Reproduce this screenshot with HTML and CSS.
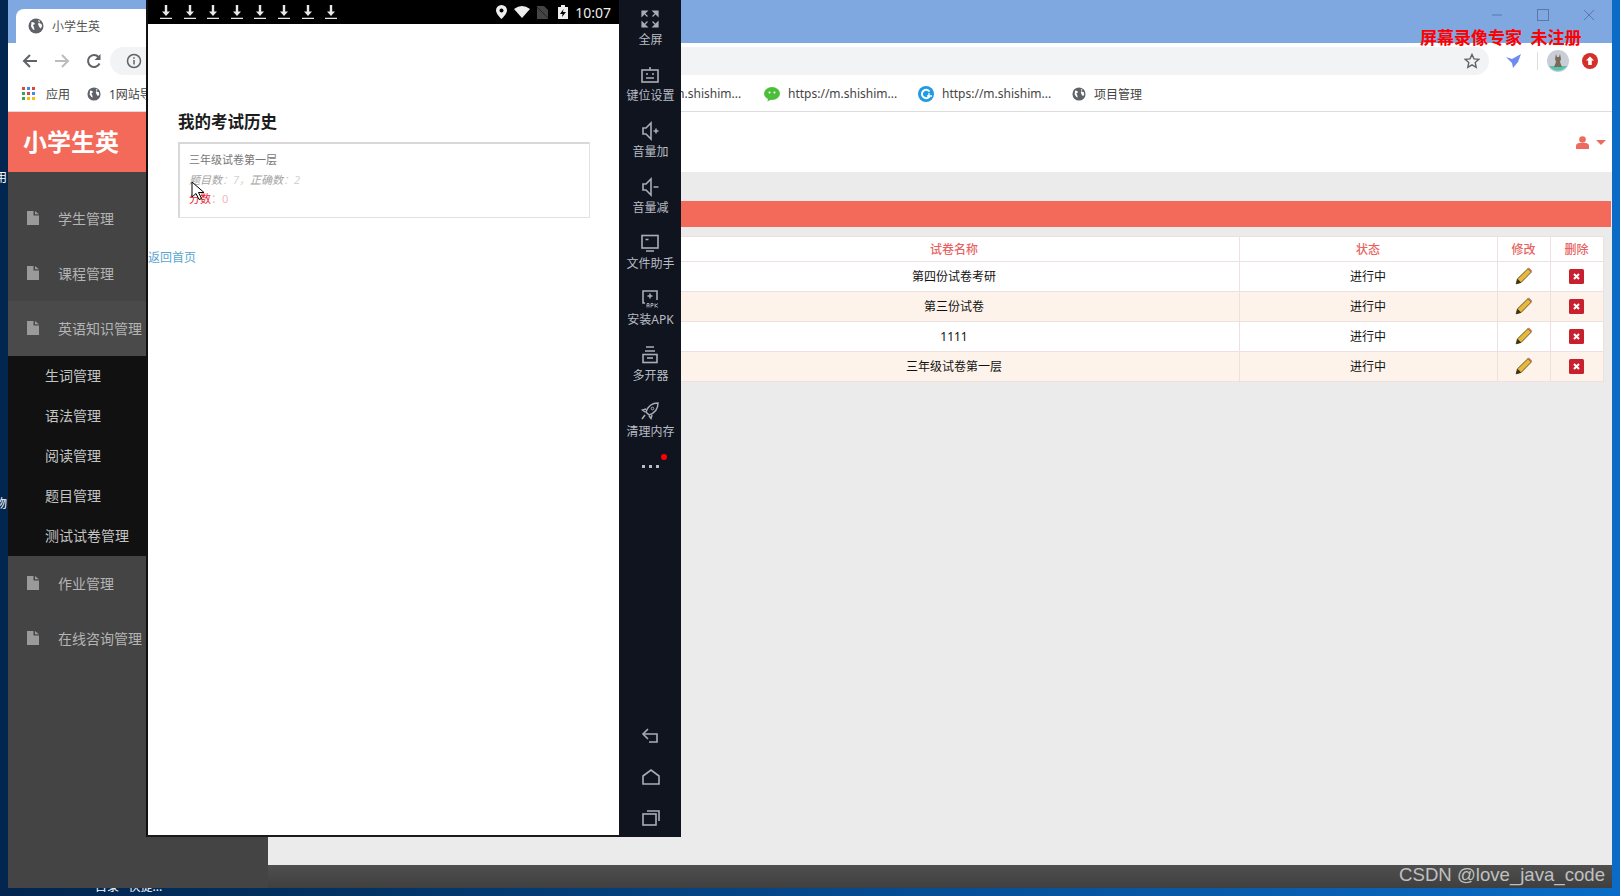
FILE: index.html
```html
<!doctype html>
<html>
    <head>
        <meta charset="UTF-8">
        <title>小学生英</title>
        <link rel="stylesheet" href="styles.css">
    </head>
    <body>
        <svg class="defs" width="0" height="0">
            <symbol id="globe" viewBox="0 0 16 16">
                <circle cx="8" cy="8" r="7.500" fill="#5f6368"/>
                <path d="M3.500 4l2.500.5 1 1.500-2 1 1 2.500.5 2.500-1.500-.5-2-3zM10 2l2 1-1 2 2.500 1 .5 2.500-1.500 2-1.500-2-1-2.500 1-1.500z" fill="#fff"/>
            </symbol>
            <symbol id="doc" viewBox="0 0 12 14">
                <path d="M0 0h6.500v4.500H12V14H0zM8 0l4 3.200H8z" fill="#9a9a9a"/>
            </symbol>
            <symbol id="dl" viewBox="0 0 12 14">
                <path d="M4.800 0h2.400v6.500H10L6 11 2 6.500h2.800zM0 12.800h12V14H0z" fill="#e8e8e8"/>
            </symbol>
            <symbol id="pencil" viewBox="0 0 16 16">
                <path d="M1 15l1.200-4.500L11.500 1.500l3 3L5.500 13.700z" fill="#e6b93c" stroke="#5c4a1e" stroke-width=".8"/>
                <path d="M11.500 1.500l3 3 .8-1-3-3z" fill="#c9705a"/>
                <path d="M1 15l1.200-4.500 3.300 3.200z" fill="#3b3220"/>
            </symbol>
            <symbol id="del" viewBox="0 0 15 15">
                <rect width="15" height="15" rx="1.500" fill="#c9202f"/>
                <path d="M5 5l5 5M10 5l-5 5" stroke="#fff" stroke-width="2"/>
            </symbol>
        </svg>

        <div class="desktop">
            <span class="desk-text desk-a">用</span>
            <span class="desk-text desk-b">物</span>
            <span class="desk-text desk-c">目录 · 快捷...</span>

            <div class="browser">
                <div class="titlebar">
                    <div class="tab">
                        <svg class="ico16"><use href="#globe"/></svg>
                        <span>小学生英</span>
                    </div>
                    <div class="win-controls">
                        <svg width="12" height="12" viewBox="0 0 12 12"><path d="M1 6h10" stroke="#5b78a8"/></svg>
                        <svg width="12" height="12" viewBox="0 0 12 12"><rect x=".5" y=".5" width="11" height="11" fill="none" stroke="#5b78a8"/></svg>
                        <svg width="12" height="12" viewBox="0 0 12 12"><path d="M1 1l10 10M11 1L1 11" stroke="#5b78a8"/></svg>
                    </div>
                </div>

                <div class="toolbar">
                    <svg class="nav-btn" width="16" height="16" viewBox="0 0 16 16"><path d="M15 8H2M8 2L2 8l6 6" fill="none" stroke="#5f6368" stroke-width="2"/></svg>
                    <svg class="nav-btn" width="16" height="16" viewBox="0 0 16 16"><path d="M1 8h13M8 2l6 6-6 6" fill="none" stroke="#b9bcc0" stroke-width="2"/></svg>
                    <svg class="nav-btn" width="16" height="16" viewBox="0 0 16 16"><path d="M13.500 10.500A6 6 0 1 1 12.500 4" fill="none" stroke="#5f6368" stroke-width="2"/><path d="M14.500 1v6h-6z" fill="#5f6368"/></svg>
                    <div class="omnibox">
                        <svg width="16" height="16" viewBox="0 0 16 16"><circle cx="8" cy="8" r="6.500" fill="none" stroke="#5f6368" stroke-width="1.500"/><path d="M8 7v4.500M8 4.300v1.500" stroke="#5f6368" stroke-width="1.500"/></svg>
                        <svg class="star" width="16" height="16" viewBox="0 0 16 16"><path d="M8 1.500l2 4.400 4.700.5-3.500 3.200 1 4.700L8 11.900l-4.200 2.400 1-4.700-3.500-3.200 4.700-.5z" fill="none" stroke="#5f6368" stroke-width="1.400"/></svg>
                    </div>
                    <svg class="bird" width="18" height="16" viewBox="0 0 18 16"><path d="M1 4l6 2 9-5-3 8-5 6-1-5z" fill="#6d8bf0"/></svg>
                    <span class="tool-divider"></span>
                    <svg class="avatar" width="22" height="22" viewBox="0 0 22 22">
                        <circle cx="11" cy="11" r="11" fill="#c9ced6"/>
                        <path d="M2 16h18a11 11 0 0 1-18 0z" fill="#56c4ad"/>
                        <path d="M9 4l1 3h2l1-3 1 5-1 3 2 5H7l2-5-1-3z" fill="#7a6a58"/>
                    </svg>
                    <svg class="upload" width="16" height="16" viewBox="0 0 16 16"><circle cx="8" cy="8" r="8" fill="#d3302a"/><path d="M8 3.500l4 4H9.800V12H6.200V7.500H4z" fill="#fff"/></svg>
                </div>

                <div class="bookmarks">
                    <span class="bm bm-apps">
                        <svg class="ico14" viewBox="0 0 14 14">
                            <rect x="0" y="0" width="3" height="3" fill="#d9483b"/><rect x="5" y="0" width="3" height="3" fill="#4285f4"/><rect x="10" y="0" width="3" height="3" fill="#d9483b"/>
                            <rect x="0" y="5" width="3" height="3" fill="#34a853"/><rect x="5" y="5" width="3" height="3" fill="#d9483b"/><rect x="10" y="5" width="3" height="3" fill="#4285f4"/>
                            <rect x="0" y="10" width="3" height="3" fill="#34a853"/><rect x="5" y="10" width="3" height="3" fill="#fbbc05"/><rect x="10" y="10" width="3" height="3" fill="#fbbc05"/>
                        </svg>
                        应用
                    </span>
                    <span class="bm bm-first"><svg class="ico14"><use href="#globe"/></svg>1网站导航</span>
                    <span class="bm"><svg class="ico14"><use href="#globe"/></svg>https://m.shishim...</span>
                    <span class="bm">
                        <svg class="ico16" viewBox="0 0 16 16"><ellipse cx="8" cy="7.500" rx="8" ry="6.500" fill="#4cbf3a"/><path d="M4 12l-.5 3.500L8 13z" fill="#4cbf3a"/><circle cx="5.500" cy="6.500" r="1" fill="#fff"/><circle cx="10.500" cy="6.500" r="1" fill="#fff"/></svg>
                        https://m.shishim...
                    </span>
                    <span class="bm">
                        <svg class="ico16" viewBox="0 0 16 16"><circle cx="8" cy="8" r="8" fill="#1e9be8"/><path d="M11.500 5.500A4.200 4.200 0 1 0 11.500 10.500" fill="none" stroke="#fff" stroke-width="2"/><path d="M11 7v5M9 10h5" stroke="#fff" stroke-width="1.300"/></svg>
                        https://m.shishim...
                    </span>
                    <span class="bm"><svg class="ico14"><use href="#globe"/></svg>项目管理</span>
                </div>

                <div class="app">
                    <aside class="sidebar">
                        <div class="logo">小学生英</div>
                        <ul class="menu">
                            <li class="menu-item"><svg class="doc"><use href="#doc"/></svg>学生管理</li>
                            <li class="menu-item"><svg class="doc"><use href="#doc"/></svg>课程管理</li>
                            <li class="menu-item is-open"><svg class="doc"><use href="#doc"/></svg>英语知识管理</li>
                            <li class="submenu">
                                <a>生词管理</a>
                                <a>语法管理</a>
                                <a>阅读管理</a>
                                <a>题目管理</a>
                                <a>测试试卷管理</a>
                            </li>
                            <li class="menu-item"><svg class="doc"><use href="#doc"/></svg>作业管理</li>
                            <li class="menu-item"><svg class="doc"><use href="#doc"/></svg>在线咨询管理</li>
                        </ul>
                    </aside>

                    <div class="main">
                        <header class="top">
                            <svg width="13" height="13" viewBox="0 0 13 13"><circle cx="6.500" cy="3.500" r="3.300" fill="#ef6a5e"/><path d="M0 13V10q0-2.500 3-3h7q3 .5 3 3v3z" fill="#ef6a5e"/></svg>
                            <span class="caret"></span>
                        </header>
                        <section class="content">
                            <div class="bar"></div>
                            <table class="grid">
                                <colgroup>
                                    <col class="c-id"><col class="c-name"><col class="c-state"><col class="c-edit"><col class="c-del">
                                </colgroup>
                                <thead>
                                    <tr><th>编号</th><th>试卷名称</th><th>状态</th><th>修改</th><th>删除</th></tr>
                                </thead>
                                <tbody>
                                    <tr><td>1</td><td>第四份试卷考研</td><td>进行中</td><td><svg class="pencil"><use href="#pencil"/></svg></td><td><svg class="ico15"><use href="#del"/></svg></td></tr>
                                    <tr><td>2</td><td>第三份试卷</td><td>进行中</td><td><svg class="pencil"><use href="#pencil"/></svg></td><td><svg class="ico15"><use href="#del"/></svg></td></tr>
                                    <tr><td>3</td><td>1111</td><td>进行中</td><td><svg class="pencil"><use href="#pencil"/></svg></td><td><svg class="ico15"><use href="#del"/></svg></td></tr>
                                    <tr><td>4</td><td>三年级试卷第一层</td><td>进行中</td><td><svg class="pencil"><use href="#pencil"/></svg></td><td><svg class="ico15"><use href="#del"/></svg></td></tr>
                                </tbody>
                            </table>
                        </section>
                        <footer class="bottom"></footer>
                    </div>
                </div>
            </div>

            <div class="emulator">
                <div class="screen">
                    <div class="statusbar">
                        <div class="dl-group">
                            <svg><use href="#dl"/></svg><svg><use href="#dl"/></svg><svg><use href="#dl"/></svg><svg><use href="#dl"/></svg>
                            <svg><use href="#dl"/></svg><svg><use href="#dl"/></svg><svg><use href="#dl"/></svg><svg><use href="#dl"/></svg>
                        </div>
                        <div class="status-right">
                            <svg width="11" height="14" viewBox="0 0 11 14"><path d="M5.500 0A5.500 5.500 0 0 1 11 5.500C11 9 5.500 14 5.500 14S0 9 0 5.500A5.500 5.500 0 0 1 5.500 0z" fill="#eee"/><circle cx="5.500" cy="5.500" r="2" fill="#000"/></svg>
                            <svg width="16" height="12" viewBox="0 0 16 12"><path d="M0 3q8-6 16 0L8 12z" fill="#eee"/></svg>
                            <svg width="11" height="13" viewBox="0 0 11 13"><path d="M0 0h7l4 4v9H0z" fill="#444"/><path d="M0 1l11 11" stroke="#222"/></svg>
                            <svg class="batt" width="10" height="14" viewBox="0 0 10 14"><path d="M3 0h4v2h3v12H0V2h3z" fill="#eee"/><path d="M5.500 4L2 9h2.500L4 12l4-5H5z" fill="#000"/></svg>
                            <span class="clock">10:07</span>
                        </div>
                    </div>
                    <div class="phone-page">
                        <h1>我的考试历史</h1>
                        <div class="exam-card">
                            <p class="exam-name">三年级试卷第一层</p>
                            <p class="exam-count">题目数<span class="faint">：7，</span>正确数<span class="faint">：2</span></p>
                            <p class="exam-score">分数<span class="faint-red">：0</span></p>
                        </div>
                        <a class="back-link">返回首页</a>
                    </div>
                </div>

                <div class="tools">
                    <div class="tool">
                        <svg viewBox="0 0 20 20"><path d="M2 2h5L2 7zM18 2h-5l5 5zM2 18h5l-5-5zM18 18h-5l5-5zM5 5l2.500 2.500M15 5l-2.500 2.500M5 15l2.500-2.500M15 15l-2.500-2.500" fill="#a9adb5" stroke="#a9adb5" stroke-width="1.200"/></svg>
                        <span>全屏</span>
                    </div>
                    <div class="tool">
                        <svg viewBox="0 0 20 20"><rect x="2" y="5" width="16" height="12" fill="none" stroke="#a9adb5" stroke-width="1.600"/><path d="M10 2v3M6 9h2M12 9h2M6 13h8" stroke="#a9adb5" stroke-width="1.600"/></svg>
                        <span>键位设置</span>
                    </div>
                    <div class="tool">
                        <svg viewBox="0 0 20 20"><path d="M3 7h3l5-5v16l-5-5H3z" fill="none" stroke="#a9adb5" stroke-width="1.600"/><path d="M13.500 10h5M16 7.500v5" stroke="#a9adb5" stroke-width="1.500"/></svg>
                        <span>音量加</span>
                    </div>
                    <div class="tool">
                        <svg viewBox="0 0 20 20"><path d="M3 7h3l5-5v16l-5-5H3z" fill="none" stroke="#a9adb5" stroke-width="1.600"/><path d="M13.500 10h5" stroke="#a9adb5" stroke-width="1.500"/></svg>
                        <span>音量减</span>
                    </div>
                    <div class="tool">
                        <svg viewBox="0 0 20 20"><rect x="2" y="2.500" width="16" height="12.500" fill="none" stroke="#a9adb5" stroke-width="1.600"/><path d="M5.500 6.500h3M6 18h8" stroke="#a9adb5" stroke-width="1.600"/></svg>
                        <span>文件助手</span>
                    </div>
                    <div class="tool">
                        <svg viewBox="0 0 20 20"><path d="M5 14H3V2h14v9" fill="none" stroke="#a9adb5" stroke-width="1.600"/><path d="M10 4.500v5M7.500 7h5" stroke="#a9adb5" stroke-width="1.500"/><path d="M7 18.500v-4h2v4M7 16.500h2M11 18.500v-4h2v2h-2M15 14.500v4M18 14.500l-3 2 3 2" fill="none" stroke="#a9adb5" stroke-width=".9"/></svg>
                        <span>安装APK</span>
                    </div>
                    <div class="tool">
                        <svg viewBox="0 0 20 20"><path d="M6 2h8M5 6h10" stroke="#a9adb5" stroke-width="1.600"/><rect x="3" y="9.500" width="14" height="8" fill="none" stroke="#a9adb5" stroke-width="1.600"/><path d="M7 13h6" stroke="#a9adb5" stroke-width="1.600"/></svg>
                        <span>多开器</span>
                    </div>
                    <div class="tool">
                        <svg viewBox="0 0 20 20"><path d="M18 2c-6 0-10 3-12 9l3 3c6-2 9-6 9-12zM6 8L2.500 9 5 11M12 14l-1 3.500-2-2.500M5 14l-3 4" fill="none" stroke="#a9adb5" stroke-width="1.500"/><circle cx="12.500" cy="7.500" r="1.300" fill="none" stroke="#a9adb5"/></svg>
                        <span>清理内存</span>
                    </div>
                    <div class="more">
                        <i></i><i></i><i></i>
                        <b class="red-dot"></b>
                    </div>
                    <div class="sys-keys">
                        <svg viewBox="0 0 20 20"><path d="M7 3L2 8l5 5" fill="none" stroke="#a9adb5" stroke-width="1.600"/><path d="M2 8h14v8H8" fill="none" stroke="#a9adb5" stroke-width="1.600"/></svg>
                        <svg viewBox="0 0 20 20"><path d="M2 9l8-6 8 6v8H2z" fill="none" stroke="#a9adb5" stroke-width="1.600"/></svg>
                        <svg viewBox="0 0 20 20"><rect x="2" y="6" width="13" height="11" fill="none" stroke="#a9adb5" stroke-width="1.600"/><path d="M6 3h12v10" fill="none" stroke="#a9adb5" stroke-width="1.600"/></svg>
                    </div>
                </div>
            </div>

            <svg class="cursor" width="14" height="20" viewBox="0 0 14 20"><path d="M1 1v15l4-3.500 3 6 2.500-1-3-6H13z" fill="#fff" stroke="#000"/></svg>
            <div class="rec-mark">屏幕录像专家 未注册</div>
            <div class="csdn-mark">CSDN @love_java_code</div>
        </div>
    </body>
</html>
```

FILE: styles.css
```css
:root {
    --coral: #f46a5a;
    --panel: #444;
    --tool-bg: #10141f;
    --tool-fg: #b8bcc4;
    --line: #eedfe0;
}

html, body {
    margin: 0;
    height: 100%;
    overflow: hidden;
}

* {
    box-sizing: border-box;
    font-family: "Noto Sans", "Noto Sans CJK SC", sans-serif;
}

.defs {
    position: absolute;
}

.ico14 {
    width: 14px;
    height: 14px;
    flex: none;
}

.ico15 {
    width: 15px;
    height: 15px;
    display: block;
    margin: 0 auto;
}

.ico16 {
    width: 16px;
    height: 16px;
    flex: none;
}

.pencil {
    width: 18px;
    height: 18px;
    display: block;
    margin: 0 auto;
}

.desktop {
    position: relative;
    width: 1620px;
    height: 896px;
    overflow: hidden;
    background: linear-gradient(90deg, #02264f 0, #03305f 300px, #054c93 900px, #0a6cc6 1620px);
}

.desk-text {
    position: absolute;
    color: #fff;
    font-size: 12px;
    line-height: 16px;
}

.desk-a {
    left: -5px;
    top: 170px;
}

.desk-b {
    left: -5px;
    top: 496px;
}

.desk-c {
    left: 95px;
    top: 879px;
}

/* browser window */
.browser {
    position: absolute;
    left: 8px;
    top: 0;
    width: 1604px;
    height: 888px;
    display: flex;
    flex-direction: column;
}

.titlebar {
    height: 43px;
    flex: none;
    background: #7fa8e0;
    display: flex;
    justify-content: space-between;
    padding-left: 8px;
}

.tab {
    margin-top: 9px;
    width: 240px;
    background: #fff;
    border-radius: 8px 8px 0 0;
    display: flex;
    align-items: center;
    gap: 8px;
    padding: 0 0 0 12px;
    font-size: 12px;
    color: #555;
}

.win-controls {
    display: flex;
    align-items: flex-start;
    gap: 34px;
    padding: 9px 17px 0 0;
}

.toolbar {
    height: 35px;
    flex: none;
    background: #fff;
    display: flex;
    align-items: center;
    padding-left: 14px;
}

.nav-btn {
    margin-right: 16px;
}

.omnibox {
    margin-left: -8px;
    width: 1379px;
    height: 28px;
    background: #f1f3f4;
    border-radius: 14px;
    display: flex;
    align-items: center;
    justify-content: space-between;
    padding: 0 9px 0 16px;
}

.bird {
    margin-left: 16px;
}

.tool-divider {
    width: 1px;
    height: 18px;
    background: #ddd;
    margin-left: 14px;
}

.avatar {
    margin-left: 9px;
}

.upload {
    margin-left: 13px;
}

.bookmarks {
    height: 34px;
    flex: none;
    background: #fff;
    border-bottom: 1px solid #ddd;
    display: flex;
    align-items: center;
    padding: 0 0 2px 14px;
    font-size: 12px;
    color: #444;
}

.bm {
    width: 154px;
    display: flex;
    align-items: center;
    gap: 8px;
    white-space: nowrap;
}

.bm-apps {
    width: 65px;
    gap: 10px;
}

.bm-first {
    width: 523px;
}

.app {
    flex: 1;
    display: flex;
    min-height: 0;
}

.sidebar {
    width: 260px;
    flex: none;
    background: var(--panel);
}

.logo {
    height: 60px;
    background: var(--coral);
    color: #fff;
    font-size: 24px;
    font-weight: 700;
    line-height: 60px;
    padding-left: 15px;
}

.menu {
    list-style: none;
    margin: 0;
    padding: 19px 0 0;
}

.menu-item {
    height: 55px;
    display: flex;
    align-items: center;
    font-size: 14px;
    color: #b4b4b4;
    padding: 0 0 2px 19px;
}

.menu-item.is-open {
    background: #4a4a4a;
}

.doc {
    width: 12px;
    height: 14px;
    margin-right: 19px;
}

.submenu {
    background: #111;
}

.submenu a {
    display: block;
    height: 40px;
    line-height: 40px;
    padding-left: 37px;
    font-size: 14px;
    color: #c4c4c4;
}

.main {
    flex: 1;
    display: flex;
    flex-direction: column;
    min-width: 0;
}

.top {
    height: 60px;
    flex: none;
    background: #fff;
    display: flex;
    align-items: center;
    justify-content: flex-end;
    gap: 7px;
    padding-right: 6px;
}

.caret {
    width: 0;
    height: 0;
    border: 5px solid transparent;
    border-top-color: #ef6a5e;
    border-bottom: 0;
}

.content {
    flex: 1;
    background: #ebebeb;
    padding: 29px 1px 0 0;
}

.bar {
    height: 26px;
    background: var(--coral);
    margin-bottom: 9px;
}

.grid {
    width: 1326px;
    margin-left: 9px;
    table-layout: fixed;
    border-collapse: collapse;
    background: #fff;
    font-size: 12px;
    color: #111;
    text-align: center;
}

.c-id {
    width: 392px;
}

.c-name {
    width: 570px;
}

.c-state {
    width: 258px;
}

.c-edit {
    width: 53px;
}

.c-del {
    width: 53px;
}

.grid th, .grid td {
    padding: 0 0 1px;
    border: 1px solid var(--line);
}

.grid th {
    height: 25px;
    font-weight: 500;
    color: #e8625f;
}

.grid td {
    height: 30px;
}

.grid tbody tr:nth-child(even) {
    background: #fdf3ea;
}

.grid th:first-child, .grid td:first-child {
    border-left: 0;
}

.bottom {
    height: 23px;
    flex: none;
    background: linear-gradient(#4f4f4f, #3f3f3f);
}

/* emulator window */
.emulator {
    position: absolute;
    left: 146px;
    top: 0;
    width: 535px;
    height: 837px;
    display: flex;
}

.screen {
    width: 473px;
    flex: none;
    background: #fff;
    border-left: 2px solid #111;
    border-bottom: 2px solid #1a1a1a;
    display: flex;
    flex-direction: column;
}

.statusbar {
    height: 24px;
    flex: none;
    background: #000;
    display: flex;
    align-items: center;
    justify-content: space-between;
    padding: 0 8px 0 12px;
}

.dl-group {
    display: flex;
    gap: 11.600px;
}

.dl-group svg {
    width: 12px;
    height: 14px;
}

.status-right {
    display: flex;
    align-items: center;
    gap: 7px;
}

.batt {
    margin-left: 3px;
}

.clock {
    font-size: 14px;
    color: #eee;
}

.phone-page {
    padding: 87px 0 0;
}

h1 {
    margin: 0 0 9px 30px;
    font-size: 16.500px;
    line-height: 22px;
    font-weight: 700;
    color: #1c1c1c;
}

.exam-card {
    margin: 0 29px 0 30px;
    height: 76px;
    border: 1px solid #e2e2e2;
    border-top: 2px solid #d8d8d8;
    border-left: 2px solid #d8d8d8;
    padding: 6px 0 0 9px;
    font-size: 11px;
}

.exam-card p {
    margin: 0;
    line-height: 19.500px;
}

.exam-name {
    color: #777;
}

.exam-count {
    color: #a4a4a4;
    font-style: italic;
}

.faint {
    color: #d2d2d2;
}

.exam-score {
    color: #e8242f;
}

.faint-red {
    color: #f5b5ba;
}

.back-link {
    display: block;
    margin-top: 31px;
    font-size: 12px;
    line-height: 18px;
    color: #5aa5d0;
}

.tools {
    flex: 1;
    background: var(--tool-bg);
    display: flex;
    flex-direction: column;
    align-items: center;
    padding-left: 1px;
}

.tool {
    height: 56px;
    flex: none;
    padding-top: 9px;
    display: flex;
    flex-direction: column;
    align-items: center;
    color: var(--tool-fg);
    font-size: 12px;
    line-height: 20px;
    white-space: nowrap;
}

.tool svg {
    width: 20px;
    height: 20px;
    margin-bottom: 1px;
}

.more {
    position: relative;
    display: flex;
    gap: 4px;
    margin-top: 17px;
}

.more i {
    width: 3px;
    height: 3px;
    background: #b8bcc4;
}

.red-dot {
    position: absolute;
    left: 19px;
    top: -11px;
    width: 6px;
    height: 6px;
    border-radius: 50%;
    background: #f00;
}

.sys-keys {
    margin-top: auto;
    padding-bottom: 9px;
    display: flex;
    flex-direction: column;
    gap: 21px;
}

.sys-keys svg {
    display: block;
    width: 20px;
    height: 20px;
}

/* things lying over everything */
.cursor {
    position: absolute;
    left: 191px;
    top: 181px;
}

.rec-mark {
    position: absolute;
    left: 1420px;
    top: 27px;
    font-size: 17px;
    line-height: 22px;
    font-weight: 700;
    color: #f00;
    word-spacing: 4px;
    white-space: nowrap;
}

.csdn-mark {
    position: absolute;
    right: 15px;
    top: 864px;
    font-family: "Liberation Sans", sans-serif;
    font-size: 18.600px;
    line-height: 22px;
    color: #c0c0c0;
    white-space: nowrap;
}
```
